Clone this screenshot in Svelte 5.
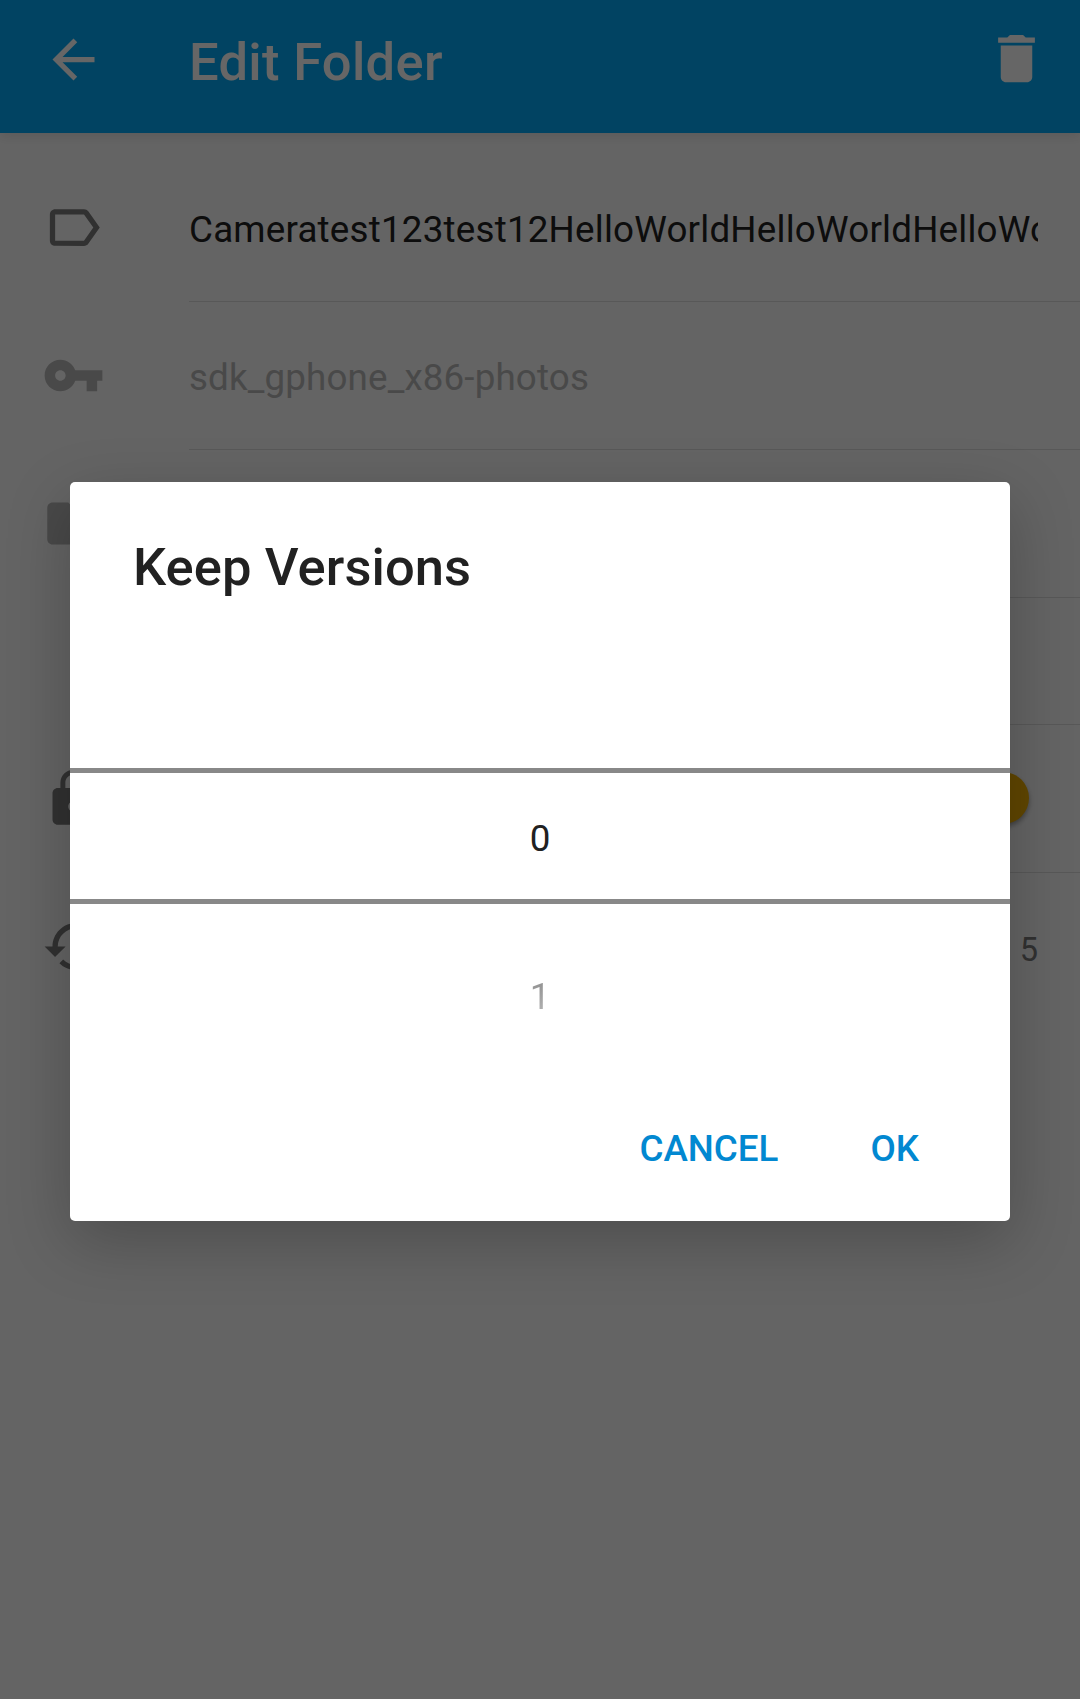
<script>
  const icons = {
    label: 'M17.63 5.84C17.27 5.33 16.67 5 16 5L5 5.01C3.9 5.01 3 5.9 3 7v10c0 1.1.9 1.99 2 1.99L16 19c.67 0 1.27-.33 1.63-.84L22 12l-4.37-6.16zM16 17H5V7h11l3.55 5L16 17z',
    key: 'M12.65 10C11.83 7.67 9.61 6 7 6c-3.31 0-6 2.69-6 6s2.69 6 6 6c2.61 0 4.83-1.67 5.65-4H17v4h4v-4h2v-4H12.65zM7 14c-1.1 0-2-.9-2-2s.9-2 2-2 2 .9 2 2-.9 2-2 2z',
    folder: 'M10 4H4c-1.1 0-1.99.9-1.99 2L2 18c0 1.1.9 2 2 2h16c1.1 0 2-.9 2-2V8c0-1.1-.9-2-2-2h-8l-2-2z',
    lock: 'M18 8h-1V6c0-2.76-2.24-5-5-5S7 3.24 7 6v2H6c-1.1 0-2 .9-2 2v10c0 1.1.9 2 2 2h12c1.1 0 2-.9 2-2V10c0-1.1-.9-2-2-2zm-6 9c-1.1 0-2-.9-2-2s.9-2 2-2 2 .9 2 2-.9 2-2 2zm3.1-9H8.9V6c0-1.71 1.39-3.1 3.1-3.1 1.71 0 3.1 1.39 3.1 3.1v2z',
    history: 'M13 3c-4.97 0-9 4.03-9 9H1l3.89 3.89.07.14L9 12H6c0-3.87 3.13-7 7-7s7 3.13 7 7-3.13 7-7 7c-1.93 0-3.68-.79-4.94-2.06l-1.42 1.42C8.27 19.99 10.51 21 13 21c4.97 0 9-4.03 9-9s-4.03-9-9-9z',
    back: 'M20 11H7.83l5.59-5.59L12 4l-8 8 8 8 1.41-1.41L7.83 13H20v-2z',
    trash: 'M6 19c0 1.1.9 2 2 2h8c1.1 0 2-.9 2-2V7H6v12zM19 4h-3.5l-1-1h-5l-1 1H5v2h14V4z',
  };
</script>

{#snippet icon(name)}
  <svg class="icon" viewBox="0 0 24 24" aria-hidden="true"><path d={icons[name]} /></svg>
{/snippet}

<div class="screen">
  <header>
    {@render icon('back')}
    <h1>Edit Folder</h1>
    <div class="delete">{@render icon('trash')}</div>
  </header>
  <main>
    <div class="row">
      {@render icon('label')}
      <div class="field"><span class="name">Cameratest123test12HelloWorldHelloWorldHelloWorld</span></div>
    </div>
    <div class="row disabled">
      {@render icon('key')}
      <div class="field"><span class="path">sdk_gphone_x86-photos</span></div>
    </div>
    <div class="row disabled">
      {@render icon('folder')}
      <div class="field"></div>
    </div>
    <div class="row short"><div class="field"></div></div>
    <div class="row">
      {@render icon('lock')}
      <div class="field end"><span class="thumb"></span></div>
    </div>
    <div class="row last">
      {@render icon('history')}
      <div class="field end"><span class="count">5</span></div>
    </div>
  </main>
  <div class="scrim">
    <div class="dialog" role="dialog">
      <h2>Keep Versions</h2>
      <div class="picker">
        <div class="slot"></div>
        <div class="slot current">0</div>
        <div class="slot next">1</div>
      </div>
      <div class="actions">
        <button>CANCEL</button>
        <button>OK</button>
      </div>
    </div>
  </div>
</div>

<style>
  :global(body) { margin: 0; }
  .screen {
    position: relative;
    width: 1080px;
    height: 1699px;
    overflow: hidden;
    background: #fafafa;
    font-family: Roboto, sans-serif;
    font-size: 36.75px;
    color: #212121;
  }
  .icon { display: block; width: 63px; height: 63px; flex: none; fill: currentColor; }
  header {
    display: flex;
    align-items: center;
    height: 133px;
    box-sizing: border-box;
    padding: 0 32px 15px 42px;
    background: #03a9f4;
    color: #fff;
    box-shadow: 0 4px 10px rgba(0, 0, 0, 0.09);
  }
  .delete { padding-bottom: 2px; }
  h1 {
    flex: 1;
    margin: 5px 0 0 84px;
    font-size: 52.5px;
    font-weight: 500;
    line-height: 62px;
    letter-spacing: 0.3px;
  }
  main { padding-top: 21px; }
  .row {
    display: flex;
    align-items: center;
    height: 148px;
    padding-left: 42px;
    color: #7b7b7b;
  }
  .row.short { height: 127px; padding-left: 189px; }
  .row .icon { margin: 0 84px 2px 0; }
  .field {
    flex: 1;
    min-width: 0;
    display: flex;
    align-items: center;
    height: 100%;
    box-sizing: border-box;
    padding-right: 42px;
    border-bottom: 1px solid #dcdcdc;
    white-space: nowrap;
  }
  .last .field { border-bottom: 0; }
  .field > span { padding-top: 4px; }
  .name { overflow: hidden; color: #212121; letter-spacing: 0.21px; }
  .path { letter-spacing: 0.15px; }
  .disabled { color: #b6b6b6; }
  .end { justify-content: flex-end; }
  .field > .thumb {
    width: 52px;
    height: 52px;
    box-sizing: border-box;
    margin: 0 9px 1px 0;
    border-radius: 50%;
    background: #f0b000;
    box-shadow: 0 3px 5px rgba(0, 0, 0, 0.35);
  }
  .field > .count { padding-top: 5px; font-size: 32.5px; }
  .scrim {
    position: absolute;
    inset: 0;
    padding: 482px 70px 0;
    background: rgba(0, 0, 0, 0.6);
  }
  .dialog {
    height: 739px;
    border-radius: 5px;
    background: #fff;
    box-shadow: 0 20px 64px rgba(0, 0, 0, 0.23);
    overflow: hidden;
  }
  h2 {
    margin: 0;
    padding: 54px 63px 0;
    font-size: 52.5px;
    font-weight: 500;
    line-height: 62px;
    letter-spacing: 0.08px;
  }
  .picker { padding-top: 25px; }
  .slot { display: flex; align-items: center; justify-content: center; height: 145px; }
  .slot.current {
    height: 121px;
    padding-top: 5px;
    border: solid #888;
    border-width: 5px 0;
  }
  .slot.next {
    height: 184px;
    color: transparent;
    background: linear-gradient(#8e8e8e 40%, #b4b4b4 60%);
    background-clip: text;
    -webkit-background-clip: text;
  }
  .actions { display: flex; justify-content: flex-end; gap: 50px; padding: 18px 70px 0 0; }
  button {
    padding: 21px;
    border: 0;
    background: none;
    color: #0288d1;
    font: 500 36.75px Roboto, sans-serif;
  }
</style>
